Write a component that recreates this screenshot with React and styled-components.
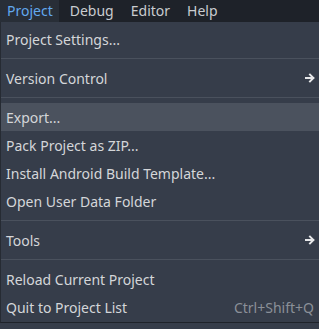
import React from "react";
import styled, { createGlobalStyle } from "styled-components";

const Global = createGlobalStyle`
  html, body { margin: 0; padding: 0; background: #363d4a; overflow: hidden; }
  body { font-family: "Noto Sans", "DejaVu Sans", sans-serif; font-size: 14px; }
`;

const Screen = styled.div`
  width: 319px;
  height: 329px;
  display: flex;
  flex-direction: column;
  background: #363d4a;
  overflow: hidden;
`;

const MenuBar = styled.div`
  height: 22px;
  display: flex;
  align-items: stretch;
  gap: 4px;
  background: #1e2229;
  flex-shrink: 0;
`;

const BarItem = styled.div`
  display: flex;
  align-items: center;
  padding: 0 6px 0 7px;
  color: ${(p) => (p.$active ? "#62a8ee" : "#c9ccd0")};
  background: ${(p) => (p.$active ? "#282e37" : "transparent")};
  line-height: 1;
`;

const Popup = styled.div`
  width: 340px;
  display: flex;
  flex-direction: column;
  padding: 3px 0 1px;
  background: #363d4a;
  border-left: 1px solid #262b33;
  border-bottom: 1px solid #1f232a;
`;

const Row = styled.div`
  height: 28px;
  display: flex;
  align-items: center;
  justify-content: space-between;
  padding: 0 27px 0 5px;
  color: #d4d6d9;
  background: ${(p) => (p.$hover ? "#4b525e" : "transparent")};
  white-space: nowrap;
`;

const Shortcut = styled.span`
  color: #8b9098;
`;

const Separator = styled.div`
  height: 11px;
  display: flex;
  align-items: center;
  &::after {
    content: "";
    flex: 1;
    height: 1px;
    background: #4a515d;
  }
`;

const Arrow = () => (
  <svg width="10" height="10" viewBox="0 0 10 10" style={{ marginRight: "-1px" }}>
    <path
      d="M1 5 H8.2 M5 1.6 L8.4 5 L5 8.4"
      fill="none"
      stroke="#e6e7e9"
      strokeWidth="2"
      strokeLinecap="square"
      strokeLinejoin="miter"
    />
  </svg>
);

const bar = ["Project", "Debug", "Editor", "Help"];

export default function App() {
  return (
    <>
      <Global />
      <Screen>
        <MenuBar>
          {bar.map((b, i) => (
            <BarItem key={b} $active={i === 0}>
              {b}
            </BarItem>
          ))}
        </MenuBar>
        <Popup>
          <Row>Project Settings...</Row>
          <Separator />
          <Row>
            Version Control
            <Arrow />
          </Row>
          <Separator />
          <Row $hover>Export...</Row>
          <Row>Pack Project as ZIP...</Row>
          <Row>Install Android Build Template...</Row>
          <Row>Open User Data Folder</Row>
          <Separator />
          <Row>
            Tools
            <Arrow />
          </Row>
          <Separator />
          <Row>Reload Current Project</Row>
          <Row>
            Quit to Project List
            <Shortcut>Ctrl+Shift+Q</Shortcut>
          </Row>
        </Popup>
      </Screen>
    </>
  );
}
